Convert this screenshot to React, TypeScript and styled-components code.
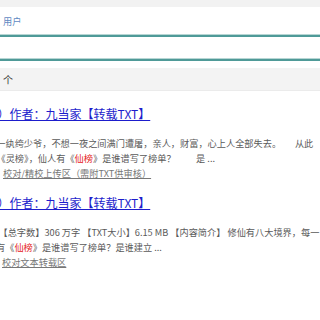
import styled, { createGlobalStyle } from 'styled-components';

// styles
const GlobalStyle = createGlobalStyle`
  html, body {
    margin: 0;
    padding: 0;
    background: #ffffff;
  }
  body {
    font-family: "Noto Sans CJK SC", "Liberation Sans", sans-serif;
    overflow: hidden;
  }
`;

const Page = styled.div`
  width: 320px;
  height: 320px;
  overflow: hidden;
  background: #ffffff;
`;

const TopBar = styled.div`
  height: 7px;
  background: #f2f2f2;
`;

const Field = styled.div<{ $height: number }>`
  height: ${p => p.$height}px;
  box-sizing: border-box;
  display: flex;
  align-items: center;
  padding: 0 3px 1px;
  border-bottom: 2px solid #4f9a98;
  box-shadow: inset 0 -1px 0 #b7d6d4;
`;

const Placeholder = styled.span`
  font-size: 9.2px;
  line-height: 12px;
  color: #5f89c2;
`;

const CountBar = styled.div`
  margin-top: 7px;
  height: 23px;
  box-sizing: border-box;
  display: flex;
  align-items: center;
  padding-left: 3px;
  background: #f3f3f3;
  border-bottom: 1px solid #ebebeb;
  font-size: 10px;
  color: #333333;
`;

const List = styled.div`
  padding-top: 15px;
`;

const Item = styled.div`
  margin-bottom: 15.5px;
`;

const Title = styled.a`
  display: block;
  margin-left: -2.5px;
  margin-bottom: 13.5px;
  font-size: 12px;
  line-height: 16px;
  color: #1d1dcc;
  text-decoration: underline;
  white-space: nowrap;
`;

const DescLine = styled.div<{ $shift: number }>`
  margin-left: ${p => p.$shift}px;
  font-size: 9.2px;
  line-height: 15px;
  color: #5a5a5a;
  white-space: pre;
`;

const Hit = styled.span`
  color: #e52222;
`;

const SourceLink = styled.a<{ $shift: number }>`
  display: block;
  margin-left: ${p => p.$shift}px;
  font-size: 9.2px;
  line-height: 14px;
  color: #777777;
  text-decoration: underline;
  white-space: nowrap;
`;

// component
export default function App() {
  return (
    <Page>
      <GlobalStyle />
      <TopBar />
      <Field $height={30}>
        <Placeholder>用户</Placeholder>
      </Field>
      <Field $height={24} />
      <CountBar>个</CountBar>

      <List>
        <Item>
          <Title>）作者：九当家【转载TXT】</Title>
          <DescLine $shift={-3.7}>一纨绔少爷，不想一夜之间满门遭屠，亲人，财富，心上人全部失去。　　从此</DescLine>
          <DescLine $shift={-3.5}>
            《灵榜》，仙人有《<Hit>仙榜</Hit>》是谁谱写了榜单？　　 是 ...
          </DescLine>
          <SourceLink $shift={3}>校对/精校上传区（需附TXT供审核）</SourceLink>
        </Item>

        <Item>
          <Title>）作者：九当家【转载TXT】</Title>
          <DescLine $shift={-1.5}>【总字数】306 万字 【TXT大小】6.15 MB 【内容简介】 修仙有八大境界，每一</DescLine>
          <DescLine $shift={-4}>
            有《<Hit>仙榜</Hit>》是谁谱写了榜单？是谁建立 ...
          </DescLine>
          <SourceLink $shift={2}>校对文本转载区</SourceLink>
        </Item>
      </List>
    </Page>
  );
}
